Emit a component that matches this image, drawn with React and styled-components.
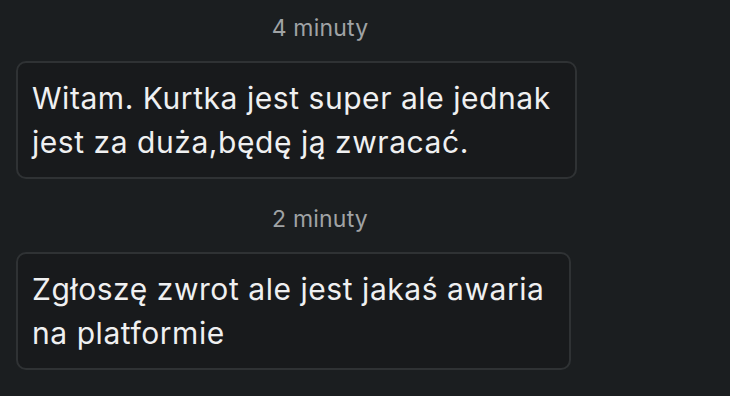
import React from 'react'
import styled, { createGlobalStyle } from 'styled-components'

const GlobalStyle = createGlobalStyle`
  html, body {
    margin: 0;
    padding: 0;
    background: #1b1e20;
    font-family: Inter, "Noto Sans", sans-serif;
  }
`

// each message keeps its own line breaks, so the bubble wraps its widest line
const messages = [
  { time: '4 minuty', lines: ['Witam. Kurtka jest super ale jednak', 'jest za duża,będę ją zwracać.'] },
  { time: '2 minuty', lines: ['Zgłoszę zwrot ale jest jakaś awaria', 'na platformie'] },
]

const App = () => {
  return (
    <>
      <GlobalStyle />
      <Thread>
        {messages.map((m) => (
          <Group key={m.time}>
            <Time>{m.time}</Time>
            <Bubble>
              {m.lines.map((line, i) => (
                <Line key={i}>{line}</Line>
              ))}
            </Bubble>
          </Group>
        ))}
      </Thread>
    </>
  )
}

const Thread = styled.div`
  width: 640px;
  height: 396px;
  padding: 14px 0 0 16px;
  box-sizing: border-box;
  display: flex;
  flex-direction: column;
  gap: 26px;
`

const Group = styled.div`
  display: flex;
  flex-direction: column;
  align-items: flex-start;
  gap: 19px;
`

const Time = styled.div`
  align-self: stretch;
  margin-left: -16px;
  text-align: center;
  font-size: 23px;
  line-height: 28px;
  letter-spacing: 0.2px;
  color: #a0a3a5;
`

const Bubble = styled.div`
  padding: 12.5px 24px 13.5px 14px;
  border: 2px solid #2f3234;
  border-radius: 10px;
  background: #181a1c;
  color: #eff0f1;
  font-size: 30px;
  line-height: 44px;
  letter-spacing: 0.55px;
`

const Line = styled.div`
  white-space: nowrap;
`

export default App
